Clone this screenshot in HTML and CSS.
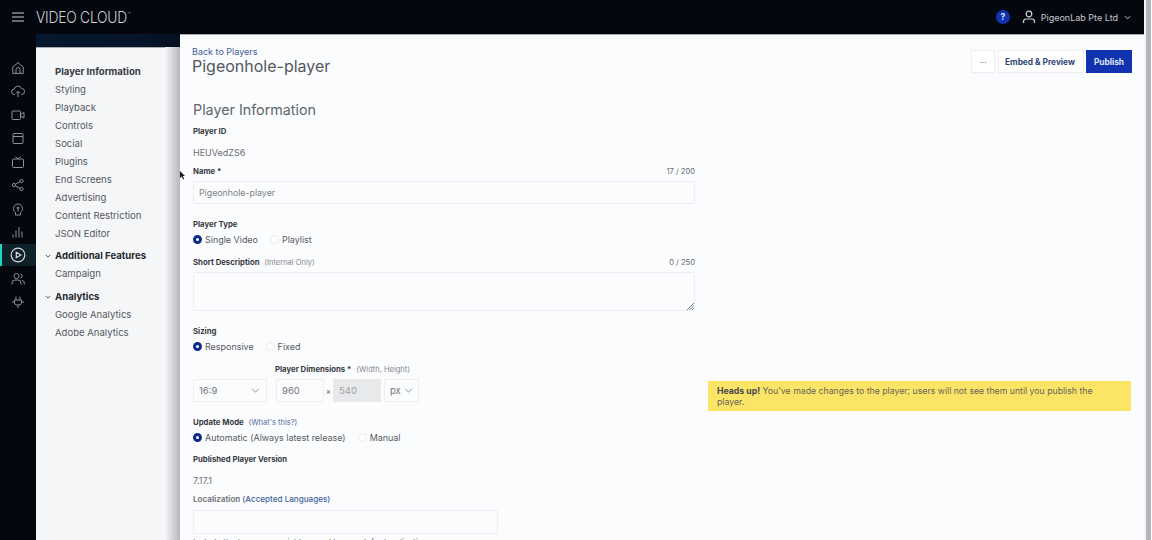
FILE: index.html
```html
<!DOCTYPE html>
<html lang="en">
<head>
<meta charset="utf-8">
<title>Video Cloud - Players</title>
<link rel="stylesheet" href="styles.css">
</head>
<body>
<div class="app">
<header class="topbar">
  <div class="brand">
    <svg class="menu-icon" viewBox="0 0 12 10" width="12" height="10"><path d="M0 1h12M0 5h12M0 9h12" stroke="#c9ccd0" stroke-width="1.2"/></svg>
    <span class="logo">VIDEO CLOUD<span class="tm">™</span></span>
  </div>
  <div class="account">
    <span class="help">?</span>
    <svg class="user-icon" viewBox="0 0 14 14" width="14" height="14" fill="none" stroke="#d0d2d6" stroke-width="1.2"><circle cx="7" cy="4" r="2.8"/><path d="M1.5 13v-1.5a2.5 2.5 0 0 1 2.5-2.5h6a2.5 2.5 0 0 1 2.5 2.5V13"/></svg>
    <span class="account-name">PigeonLab Pte Ltd</span>
    <svg viewBox="0 0 8 5" width="7" height="5" fill="none" stroke="#c9ccd0" stroke-width="1.1"><path d="M1 1l3 3 3-3"/></svg>
  </div>
</header>
<div class="shell">
  <nav class="rail">
    <span class="rail-item"><svg viewBox="0 0 14 14" width="14" height="14"><path d="M1.800 6L7 1.600 12.200 6v6.400H1.800zM5 12.400V8.500a2 2 0 0 1 4 0v3.900"/></svg></span>
    <span class="rail-item"><svg viewBox="0 0 14 14" width="14" height="14"><path d="M4 10.500H3.500a2.700 2.700 0 0 1-.3-5.400 3.800 3.800 0 0 1 7.300-.6 3 3 0 0 1 .2 6H10M7 13V7.500M5 9.300l2-2 2 2"/></svg></span>
    <span class="rail-item"><svg viewBox="0 0 14 14" width="14" height="14"><rect x="1" y="3" width="8.500" height="8.500" rx="1"/><path d="M9.500 6.500L13 4.500v5.500l-3.500-2"/></svg></span>
    <span class="rail-item"><svg viewBox="0 0 14 14" width="14" height="14"><rect x="2" y="2.500" width="10" height="10" rx="1"/><path d="M2 5.500h10"/></svg></span>
    <span class="rail-item"><svg viewBox="0 0 14 14" width="14" height="14"><rect x="1.500" y="4" width="11" height="8.500" rx="1"/><path d="M4.500 1.500L7 4l2.500-2.500"/></svg></span>
    <span class="rail-item"><svg viewBox="0 0 14 14" width="14" height="14"><circle cx="3" cy="7" r="1.600"/><circle cx="10.500" cy="3" r="1.600"/><circle cx="10.500" cy="11" r="1.600"/><path d="M4.500 6.200l4.500-2.500M4.500 7.800l4.500 2.500"/></svg></span>
    <span class="rail-item"><svg viewBox="0 0 14 14" width="14" height="14"><path d="M4.500 10.500C3 9.500 2.500 8 2.500 6.500a4.500 4.500 0 0 1 9 0c0 1.500-.5 3-2 4V13h-5zM7 4.500v5M5.500 6h3"/></svg></span>
    <span class="rail-item"><svg viewBox="0 0 14 14" width="14" height="14"><path d="M2 12.500V9.500M5 12.500V5.500M8 12.500V2M11 12.500V6.500"/></svg></span>
    <span class="rail-item rail-active"><svg viewBox="0 0 16 16" width="16" height="16"><circle cx="8" cy="8" r="6.800"/><path d="M6.300 5.200l4.600 2.800-4.600 2.800z"/></svg></span>
    <span class="rail-item"><svg viewBox="0 0 14 14" width="14" height="14"><circle cx="5.500" cy="4" r="2.500"/><path d="M1 12.500v-1.500a3 3 0 0 1 3-3h3a3 3 0 0 1 3 3v1.500M9.500 1.700a2.500 2.500 0 0 1 0 4.600M11 8.200a3 3 0 0 1 2.300 2.800v1.500"/></svg></span>
    <span class="rail-item"><svg viewBox="0 0 14 14" width="14" height="14"><path d="M5 1.500V5M9 1.500V5M1 7h2.500M10.500 7H13M3.500 5h7v2.500a2.500 2.500 0 0 1-2.500 2.500H6a2.500 2.500 0 0 1-2.500-2.500zM7 10v3"/></svg></span>
  </nav>
  <div class="side">
    <div class="side-band"></div>
    <div class="side-body">
      <aside class="subnav">
        <div class="sub-list">
          <a class="sub-link sub-current">Player Information</a>
          <a class="sub-link">Styling</a>
          <a class="sub-link">Playback</a>
          <a class="sub-link">Controls</a>
          <a class="sub-link">Social</a>
          <a class="sub-link">Plugins</a>
          <a class="sub-link">End Screens</a>
          <a class="sub-link">Advertising</a>
          <a class="sub-link">Content Restriction</a>
          <a class="sub-link">JSON Editor</a>
        </div>
        <div class="sub-group">
          <div class="sub-head"><svg viewBox="0 0 8 5" width="6" height="4" fill="none" stroke="#3c5a9a" stroke-width="1.300"><path d="M1 1l3 3 3-3"/></svg>Additional Features</div>
          <a class="sub-link">Campaign</a>
        </div>
        <div class="sub-group">
          <div class="sub-head"><svg viewBox="0 0 8 5" width="6" height="4" fill="none" stroke="#3c5a9a" stroke-width="1.300"><path d="M1 1l3 3 3-3"/></svg>Analytics</div>
          <a class="sub-link">Google Analytics</a>
          <a class="sub-link">Adobe Analytics</a>
        </div>
      </aside>
      <div class="shadow"></div>
    </div>
  </div>
  <main class="content">
    <svg class="cursor" viewBox="0 0 6 9" width="6" height="9"><path d="M0 0l5 5H2.800l1.400 3-1 .5-1.400-3L0 7z" fill="#1a1a1e"/></svg>
    <div class="page-head">
      <div>
        <a class="back">Back to Players</a>
        <h1>Pigeonhole-player</h1>
      </div>
      <div class="actions">
        <button class="btn btn-more">···</button>
        <button class="btn btn-embed">Embed &amp; Preview</button>
        <button class="btn btn-publish">Publish</button>
      </div>
    </div>
    <div class="columns">
      <form class="form">
        <h2>Player Information</h2>
        <div class="label pid">Player ID</div>
        <div class="value v-id">HEUVedZS6</div>
        <div class="label-row l-name"><span class="label">Name *</span><span class="count">17 / 200</span></div>
        <div class="input">Pigeonhole-player</div>
        <div class="label l-type">Player Type</div>
        <div class="radios">
          <span class="radio on"></span><span class="r-text">Single Video</span>
          <span class="radio"></span><span class="r-text">Playlist</span>
        </div>
        <div class="label-row l-desc"><span class="label">Short Description <span class="hint">(Internal Only)</span></span><span class="count">0 / 250</span></div>
        <div class="textarea"><svg class="grip" viewBox="0 0 8 8" width="8" height="8"><path d="M8 1L1 8M8 3.500L3.500 8M8 6L6 8" stroke="#7d8087" stroke-width="1"/></svg></div>
        <div class="label l-size">Sizing</div>
        <div class="radios">
          <span class="radio on"></span><span class="r-text">Responsive</span>
          <span class="radio"></span><span class="r-text">Fixed</span>
        </div>
        <div class="label l-dim">Player Dimensions * <span class="hint">(Width, Height)</span></div>
        <div class="dims">
          <div class="field f-ratio">16:9<svg viewBox="0 0 10 6" width="9" height="5" fill="none" stroke="#8a8e95" stroke-width="1.100"><path d="M1 1l4 4 4-4"/></svg></div>
          <div class="field f-w">960</div>
          <span class="times">×</span>
          <div class="field f-h">540</div>
          <div class="field f-unit">px<svg viewBox="0 0 10 6" width="9" height="5" fill="none" stroke="#8a8e95" stroke-width="1.100"><path d="M1 1l4 4 4-4"/></svg></div>
        </div>
        <div class="label l-mode">Update Mode <a class="hint hint-link">(What's this?)</a></div>
        <div class="radios radios-tight">
          <span class="radio on"></span><span class="r-text">Automatic (Always latest release)</span>
          <span class="radio"></span><span class="r-text">Manual</span>
        </div>
        <div class="label l-ver">Published Player Version</div>
        <div class="value v-ver">7.17.1</div>
        <div class="label-loc">Localization <a class="loc-link">(Accepted Languages)</a></div>
        <div class="input input-loc"></div>
        <div class="help-text">Include the language variables used to search for localization</div>
      </form>
      <div class="alert"><b>Heads up!</b> You've made changes to the player; users will not see them until you publish the player.</div>
    </div>
  </main>
</div>
</div>
<div class="edge"></div>
</body>
</html>
```
FILE: styles.css
```css
* { box-sizing: border-box; }
html, body { margin: 0; height: 540px; overflow: hidden; }
body { background: #f7f8fa; font-family: Inter, "Liberation Sans", sans-serif; font-size: 9px; color: #45484f; display: flex; }
a { color: inherit; text-decoration: none; }
.app { width: 1144px; flex: none; height: 540px; background: #05070f; display: flex; flex-direction: column; }
.topbar { height: 34px; flex: none; display: flex; justify-content: space-between; align-items: center; padding: 0 13px 0 12px; background: #05070f; }
.brand { display: flex; align-items: center; gap: 12px; }
.logo { color: #cdd0d4; font-family: Inter, "Liberation Sans", sans-serif; font-weight: 300; font-size: 16.500px; letter-spacing: -.3px; transform: scaleX(.84); transform-origin: left; width: 94px; white-space: nowrap; }
.tm { font-size: 5px; vertical-align: 7px; margin-left: 1px; }
.account { display: flex; align-items: center; color: #c6c8cc; font-size: 9px; }
.help { width: 14px; height: 14px; border-radius: 50%; background: #1233b0; color: #dfe3f5; font-size: 8.500px; font-weight: 700; display: flex; align-items: center; justify-content: center; margin-right: 12px; }
.account-name { margin: 0 6px 0 5px; }
.shell { flex: 1; display: flex; min-height: 0; }
.rail { width: 36px; flex: none; padding-top: 22px; display: flex; flex-direction: column; }
.rail-item { height: 23.500px; display: flex; align-items: center; justify-content: center; }
.rail-item svg { fill: none; stroke: #8e9196; stroke-width: 1; }
.rail-active { background: #0e2028; border-left: 2px solid #1fd6c4; height: 22px; margin: 0 0 1px; padding-right: 2px; }
.rail-active svg { stroke: #d5d8da; stroke-width: 1.200; }
.side { width: 144px; flex: none; display: flex; flex-direction: column; }
.side-band { height: 13px; flex: none; background: linear-gradient(90deg, #06182e, #06142a 80%, #05101f); }
.side-body { flex: 1; display: flex; min-height: 0; }
.subnav { width: 129px; flex: none; background: #f5f6f8; padding: 15px 0 0 19px; border-top: 1px solid #a8abb0; }
.sub-list { display: flex; flex-direction: column; }
.sub-link { display: block; height: 18px; line-height: 18px; font-size: 9.550px; color: #54575e; white-space: nowrap; }
.sub-current { font-weight: 700; color: #383b42; }
.sub-group { position: relative; margin-top: 4px; }
.sub-group + .sub-group { margin-top: 5px; }
.sub-head { height: 18px; line-height: 18px; font-size: 9.600px; font-weight: 700; color: #26292f; white-space: nowrap; }
.sub-head svg { position: absolute; left: -10px; top: 7px; }
.shadow { width: 15px; flex: none; background: linear-gradient(90deg, #f5f6f8, #b4b6ba); }
.content { position: relative; flex: 1; background: #fbfcfd; padding: 11px 12px 0 12px; overflow: hidden; border-top: 1px solid #a8abb0; }
.cursor { position: absolute; left: 0; top: 136px; }
.edge { flex: 1; background: linear-gradient(90deg, #f5f6f8 0, #f5f6f8 2px, #b4b6ba 2px, #b4b6ba 7px, #fbfcfd 7px); }
.page-head { display: flex; justify-content: space-between; align-items: flex-start; height: 46px; }
.back { display: block; color: #3e5b93; font-size: 9px; line-height: 10px; margin-top: 1px; }
h1 { margin: -1px 0 0; font-size: 16px; font-weight: 400; color: #54575d; line-height: 20px; }
.actions { display: flex; margin-top: 4px; }
.btn { height: 23px; border: 1px solid #eceef1; background: #fff; font: 700 8.300px Inter, "Liberation Sans", sans-serif; color: #2f4778; padding: 0; }
.btn-more { width: 24px; color: #555; font-size: 8px; font-weight: 400; margin-right: 3px; }
.btn-embed { width: 86px; margin-right: 2px; padding-right: 2px; }
.btn-publish { width: 46px; background: #1233b0; border-color: #1233b0; color: #dfe3f5; }
.columns { position: relative; }
.form { width: 503px; padding-left: 1px; }
h2 { margin: 0; font-size: 14.300px; font-weight: 400; color: #62656b; line-height: 18px; padding-top: 9px; height: 27px; }
.label { font-size: 7.750px; font-weight: 700; color: #36393f; line-height: 10px; white-space: nowrap; }
.hint { font-weight: 400; color: #85888e; font-size: 7.500px; margin-left: 3px; }
.hint-link { color: #4f6ca3; }
.label-row { display: flex; justify-content: space-between; align-items: center; }
.count { font-size: 7.600px; color: #6a6d73; }
.value { font-size: 9px; color: #6b6e74; line-height: 12px; }
.pid { margin-top: 7px; }
.v-id { margin-top: 11px; }
.l-name { margin-top: 7px; height: 10px; }
.input { height: 23px; margin-top: 5px; border: 1px solid #eceef1; border-radius: 1px; background: #fbfcfd; padding-left: 5px; line-height: 21px; font-size: 8.800px; color: #7d8086; }
.l-type { margin-top: 15px; }
.radios { display: flex; align-items: center; height: 12px; margin-top: 4px; font-size: 8.950px; color: #565961; }
.radios-tight { margin-top: 3px; }
.radio { width: 9px; height: 9px; border-radius: 50%; border: 1px solid #e8eaed; background: #fff; margin-right: 3px; flex: none; }
.radio.on { border: 3px solid #0d2a8c; }
.r-text { margin-right: 12px; white-space: nowrap; }
.l-desc { margin-top: 12px; height: 10px; }
.textarea { position: relative; height: 39px; margin-top: 5px; border: 1px solid #eceef1; border-radius: 1px; }
.grip { position: absolute; right: 0; bottom: 0; }
.l-size { margin-top: 15px; }
.l-dim { margin: 12px 0 0 82px; }
.dims { display: flex; align-items: center; margin-top: 4px; font-size: 9.500px; }
.field { height: 23px; border: 1px solid #eef0f2; background: #fbfcfd; display: flex; align-items: center; justify-content: space-between; padding: 0 5px; color: #73767c; }
.f-ratio { width: 74px; margin-right: 9px; }
.f-ratio svg { margin-right: 1px; }
.f-w { width: 48px; }
.times { width: 9px; text-align: center; font-size: 8px; color: #555; }
.f-h { width: 48px; background: #e8e9eb; border-color: #e8e9eb; color: #a0a2a7; }
.f-unit { width: 35px; margin-left: 3px; }
.l-mode { margin-top: 15px; }
.l-ver { margin-top: 11px; }
.v-ver { margin-top: 11px; }
.label-loc { margin-top: 7px; font-size: 8.100px; font-weight: 600; color: #6b6e76; line-height: 10px; }
.loc-link { color: #46639c; font-weight: 500; }
.input-loc { width: 305px; height: 24px; margin-top: 6px; }
.help-text { margin-top: 3px; font-size: 8.100px; line-height: 10px; color: #63666c; white-space: nowrap; }
.alert { position: absolute; left: 516px; top: 289px; width: 423px; height: 30px; padding: 5px 14px 0 9px; background: #fbe466; font-size: 8.720px; line-height: 11px; color: #67655a; }
.alert b { color: #454652; }
```
